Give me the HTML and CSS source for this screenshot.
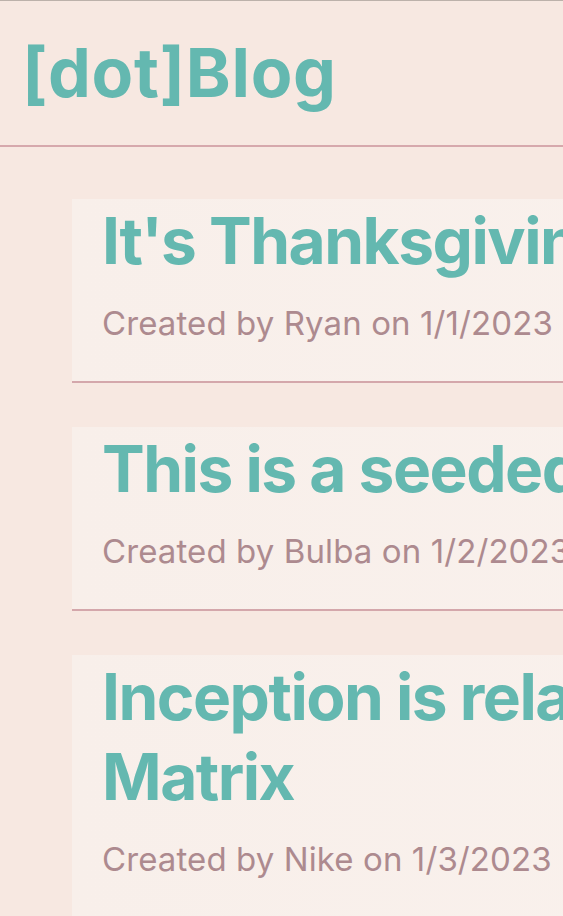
FILE: index.html
```html
<!DOCTYPE html>
<html lang="en">
<head>
<meta charset="utf-8">
<title>[dot]Blog</title>
<link rel="stylesheet" href="styles.css">
</head>
<body>
<header class="site-header">
  <h1 class="brand">[dot]Blog</h1>
</header>
<main class="posts">
  <article class="post">
    <h2 class="post-title">It's Thanksgiving</h2>
    <p class="post-meta">Created by Ryan on 1/1/2023</p>
  </article>
  <article class="post">
    <h2 class="post-title">This is a seeded post</h2>
    <p class="post-meta">Created by Bulba on 1/2/2023</p>
  </article>
  <article class="post">
    <h2 class="post-title">Inception is related to The Matrix</h2>
    <p class="post-meta">Created by Nike on 1/3/2023</p>
  </article>
</main>
</body>
</html>
```

FILE: styles.css
```css
html, body {
  margin: 0;
  padding: 0;
}
body {
  background: #f7e8e1;
  font-family: Inter, "Noto Sans", sans-serif;
  overflow: hidden;
  width: 563px;
}
.site-header {
  border-top: 1px solid #bcb1aa;
  border-bottom: 2px solid #d6a8ac;
  height: 147px;
  box-sizing: border-box;
  padding: 0 22px;
  display: flex;
  align-items: center;
}
.brand {
  margin: 0;
  font-size: 68px;
  line-height: 1.2;
  font-weight: 700;
  letter-spacing: 0.7px;
  color: #64b8b0;
  white-space: nowrap;
}
.posts {
  display: flex;
  flex-direction: column;
  gap: 44px;
  padding: 52px 0 0 72px;
}
.post {
  width: 1100px;
  background: linear-gradient(90deg, #f8efea, #faf2ee);
  border-bottom: 2px solid #d4a7ab;
  padding: 2px 30px 34px;
}
.post-title {
  margin: 0;
  font-size: 64px;
  line-height: 80px;
  font-weight: 700;
  letter-spacing: -1.5px;
  color: #64b8b0;
  width: 800px;
}
.post-meta {
  margin: 18px 0 0;
  font-size: 33px;
  line-height: 48px;
  letter-spacing: 0.1px;
  color: #ad8a8f;
  white-space: nowrap;
}
```
